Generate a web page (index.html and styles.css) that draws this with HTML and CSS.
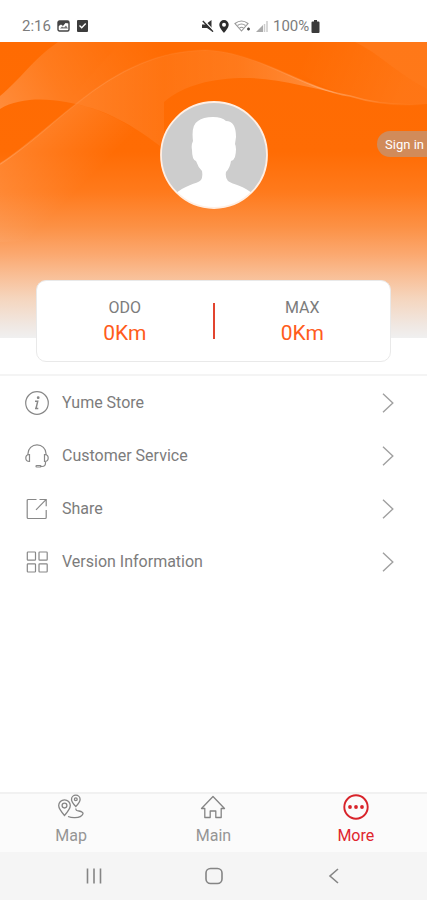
FILE: index.html
```html
<!DOCTYPE html>
<html lang="en">
<head>
<meta charset="utf-8">
<meta name="viewport" content="width=device-width, initial-scale=1">
<title>More</title>
<link rel="stylesheet" href="styles.css">
</head>
<body>
<div class="app">
  <header class="status">
    <div class="status-group">
      <span>2:16</span>
      <svg width="13" height="12" viewBox="0 0 13 12"><rect x="1" y="1" width="11" height="10" rx="1.5" fill="none" stroke="#444" stroke-width="1.4"/><path d="M1 1h11v2.5L8.500 3 6 6 4 4.500 1 6.500z" fill="#444"/><path d="M3 8.500l2-2 2 1 2-2 2 3z" fill="#777"/></svg>
      <svg class="gap" width="11" height="12" viewBox="0 0 11 12"><rect width="11" height="12" rx="1" fill="#3c3c3c"/><path d="M2.500 5.500l2.200 2.200L8.700 3.500" fill="none" stroke="#fff" stroke-width="1.400"/></svg>
    </div>
    <div class="status-group signals">
      <svg width="12" height="12" viewBox="0 0 12 12"><path d="M0 4.500h3.500L9.500 0v11L5 8H0z" fill="#333"/><path d="M1.500 0L12 11" stroke="#fff" stroke-width="1.500"/><path d="M.8 1L11 11.700" stroke="#333" stroke-width="1.400"/></svg>
      <svg width="10" height="13" viewBox="0 0 10 13"><path d="M5 0a4.700 4.700 0 0 1 4.700 4.800C9.700 8 5 13 5 13S.3 8 .3 4.800A4.700 4.700 0 0 1 5 0z" fill="#2d2d2d"/><circle cx="5" cy="4.700" r="2" fill="#fff"/></svg>
      <svg width="17" height="13" viewBox="0 0 17 13" fill="none" stroke="#999" stroke-width="1.100"><path d="M1 3.500q6.500-5 13 0L7.500 11z"/><path d="M3.500 5.500q4-3 8 0M5.500 8q2-1.500 4 0"/><path d="M13 9h3M14.500 7.500v3" stroke="#444" stroke-width="1.400"/></svg>
      <svg width="12" height="12" viewBox="0 0 12 12"><path d="M0 12L7 5v7z" fill="#aaa"/><path d="M8.500 4v8M11 1v11" stroke="#ccc" stroke-width="1.500"/></svg>
      <span>100%</span>
      <svg class="battery" width="9" height="13" viewBox="0 0 9 13"><path d="M3 0h3v1.500h1.500q1 0 1 1V12q0 1-1 1h-6q-1 0-1-1V2.500q0-1 1-1H3z" fill="#3b3b3b"/></svg>
    </div>
  </header>

  <main>
    <section class="hero">
      <svg class="waves" viewBox="0 0 427 296" preserveAspectRatio="none" aria-hidden="true">
        <defs>
          <linearGradient id="left" gradientUnits="userSpaceOnUse" x1="0" y1="70" x2="110" y2="10"><stop offset="0" stop-color="#fff" stop-opacity=".22"/><stop offset=".5" stop-color="#fff" stop-opacity=".11"/><stop offset="1" stop-color="#fff" stop-opacity=".04"/></linearGradient>
          <linearGradient id="mid" gradientUnits="userSpaceOnUse" x1="70" y1="65" x2="165" y2="5"><stop offset="0" stop-color="#fff" stop-opacity=".11"/><stop offset="1" stop-color="#fff" stop-opacity="0"/></linearGradient>
          <linearGradient id="ribbon" gradientUnits="userSpaceOnUse" x1="76" y1="0" x2="350" y2="0"><stop offset="0" stop-color="#fff" stop-opacity=".14"/><stop offset=".15" stop-color="#fff" stop-opacity=".1"/><stop offset=".32" stop-color="#fff" stop-opacity=".06"/><stop offset=".6" stop-color="#fff" stop-opacity=".1"/><stop offset="1" stop-color="#fff" stop-opacity=".26"/></linearGradient>
          <linearGradient id="low" gradientUnits="userSpaceOnUse" x1="25" y1="92" x2="80" y2="146"><stop offset="0" stop-color="#fff" stop-opacity=".15"/><stop offset="1" stop-color="#fff" stop-opacity="0"/></linearGradient>
          <linearGradient id="right" gradientUnits="userSpaceOnUse" x1="300" y1="20" x2="400" y2="60"><stop offset="0" stop-color="#fff" stop-opacity="0"/><stop offset="1" stop-color="#fff" stop-opacity=".07"/></linearGradient>
          <linearGradient id="line" gradientUnits="userSpaceOnUse" x1="0" y1="0" x2="427" y2="0"><stop offset="0" stop-color="#fff" stop-opacity=".18"/><stop offset=".2" stop-color="#fff" stop-opacity=".06"/><stop offset=".6" stop-color="#fff" stop-opacity=".02"/><stop offset=".78" stop-color="#fff" stop-opacity=".28"/><stop offset=".92" stop-color="#fff" stop-opacity=".06"/><stop offset="1" stop-color="#fff" stop-opacity="0"/></linearGradient>
        </defs>
        <path d="M0 54C20 38 32 18 58 0h65C100 20 84 44 66 60C44 56 18 56 0 67z" fill="url(#left)"/>
        <path d="M66 60C84 44 100 20 123 0h82v8C160 10 120 28 76 62z" fill="url(#mid)"/>
        <path d="M76 62C120 26 160 9 205 8C260 10 300 46 350 54C310 46 275 35 240 36C205 37 180 46 164 60V107C132 82 105 68 76 62z" fill="url(#ribbon)"/>
        <path d="M0 122C28 104 50 82 76 62C105 68 130 82 158 104C150 150 80 200 0 200z" fill="url(#low)"/>
        <path d="M0 122C28 104 50 82 76 62C120 26 160 9 205 8C260 10 300 46 350 54Q385 65 427 62" fill="none" stroke="url(#line)" stroke-width="1.500"/>
        <path d="M355 0C380 12 400 34 427 47V0z" fill="#fff" opacity=".09"/>
        <path d="M250 0C280 15 310 44 350 54Q385 65 427 62V47C400 34 380 12 355 0z" fill="url(#right)"/>
      </svg>
      <svg class="avatar" viewBox="0 0 108 108" role="img" aria-label="Profile picture">
        <defs><clipPath id="face"><circle cx="54" cy="54" r="53"/></clipPath></defs>
        <circle cx="54" cy="54" r="53" fill="#cdcdcd"/>
        <path clip-path="url(#face)" d="M14 94C24 84 37 83 41 79Q43 76 42 70Q38 66 36 60Q32 59 32 49Q31 44 33 40Q31 24 38 20Q43 16 53 16Q62 16 66 20Q76 20 76 36L75 43Q77 47 75 56Q74 59 71 60Q70 67 66 71Q65 77 68 80C73 84 84 84 94 94L92 108H16z" fill="#fff"/>
        <circle cx="54" cy="54" r="53" fill="none" stroke="#ffefe4" stroke-width="1.800"/>
      </svg>
      <button class="signin" type="button">Sign in</button>
    </section>

    <section class="stats">
      <div class="stat"><span class="stat-label">ODO</span><span class="stat-value">0Km</span></div>
      <span class="stat-rule"></span>
      <div class="stat"><span class="stat-label">MAX</span><span class="stat-value">0Km</span></div>
    </section>

    <nav class="menu" aria-label="Options">
      <a class="row" href="#store">
        <svg class="row-icon" viewBox="0 0 24 24"><circle cx="12" cy="12" r="11.300"/><path d="M10 10.300h2.700L11 17.500h2.300M10 17.500h1.500" stroke-width="1.500"/><circle cx="13.200" cy="6.700" r=".8" fill="#777"/></svg>
        <span>Yume Store</span>
        <svg class="chevron" viewBox="0 0 12 20"><path d="M1 .8L10.800 10 1 19.200"/></svg>
      </a>
      <a class="row" href="#service">
        <svg class="row-icon" viewBox="0 0 24 24"><path d="M3 11V9.500a9 8.700 0 0 1 18 0V11M20.500 18v1q0 3.500-3.500 3.500h-2"/><path d="M4.500 10.500v7Q.8 17.500.8 14t3.700-3.500zM19.500 10.500v7q3.700 0 3.700-3.500t-3.700-3.500z"/><rect x="11" y="21.500" width="5" height="1.500" rx=".7"/></svg>
        <span>Customer Service</span>
        <svg class="chevron" viewBox="0 0 12 20"><path d="M1 .8L10.800 10 1 19.200"/></svg>
      </a>
      <a class="row" href="#share">
        <svg class="row-icon" viewBox="0 0 24 24"><path d="M11.500 2.500H3.200q-1 0-1 1v17q0 1 1 1h17q1 0 1-1v-7.500M14.500 2.500h6.700v6.700M21 2.700L11 12.800"/></svg>
        <span>Share</span>
        <svg class="chevron" viewBox="0 0 12 20"><path d="M1 .8L10.800 10 1 19.200"/></svg>
      </a>
      <a class="row" href="#version">
        <svg class="row-icon" viewBox="0 0 24 24"><rect x="2.300" y="2" width="8.200" height="8.200" rx=".7"/><rect x="14" y="2" width="8.200" height="8.200" rx=".7"/><rect x="2.300" y="13.800" width="8.200" height="8.200" rx=".7"/><rect x="14" y="13.800" width="8.200" height="8.200" rx=".7"/></svg>
        <span>Version Information</span>
        <svg class="chevron" viewBox="0 0 12 20"><path d="M1 .8L10.800 10 1 19.200"/></svg>
      </a>
    </nav>
  </main>

  <nav class="tabs" aria-label="Main">
    <a class="tab" href="#map">
      <svg viewBox="0 0 28 26"><path d="M7.500 21.500Q1.700 15 1.700 11.600a5.800 5.800 0 0 1 11.600 0Q13.300 15 7.500 21.500z"/><circle cx="7.500" cy="11.600" r="2.400"/><path d="M18.800 12.500Q14.500 8 14.500 5.400a4.300 4.300 0 0 1 8.600 0Q23.100 8 18.800 12.500z"/><circle cx="18.800" cy="5.300" r="1.400"/><path d="M19 14.500q-.5 2.500 3 2.500 4.500 1 4 2.800-1.500 3.800-8 3.800-3.500.2-7-1.100"/></svg>
      <span>Map</span>
    </a>
    <a class="tab" href="#main">
      <svg viewBox="0 0 28 26"><path d="M2.500 14.500L14 2.500l11.500 12h-3.300v9h-5.400v-6.500h-5.600v6.500H5.800v-9z" stroke-linejoin="round"/></svg>
      <span>Main</span>
    </a>
    <a class="tab active" href="#more" aria-current="page">
      <svg viewBox="0 0 28 26"><circle cx="14" cy="13" r="11.700" stroke-width="1.900"/><g fill="#d8232a" stroke="none"><circle cx="8" cy="13" r="1.900"/><circle cx="14" cy="13" r="1.900"/><circle cx="20" cy="13" r="1.900"/></g></svg>
      <span>More</span>
    </a>
  </nav>

  <div class="system">
    <button type="button" aria-label="Recent apps"><svg viewBox="0 0 20 20"><path d="M3.500 2.500v15M10 2.500v15M16.500 2.500v15"/></svg></button>
    <button type="button" aria-label="Home"><svg viewBox="0 0 20 20"><rect x="2" y="2.500" width="16" height="15" rx="4.500"/></svg></button>
    <button type="button" aria-label="Back"><svg viewBox="0 0 20 20"><path d="M14 3L6 10l8 7"/></svg></button>
  </div>
</div>
</body>
</html>
```
FILE: styles.css
```css
* {
  box-sizing: border-box;
}

body {
  margin: 0;
  background: #fff;
  color: #7c7c7c;
  font-family: Roboto, "Liberation Sans", sans-serif;
  font-size: 16px;
}

a {
  color: inherit;
  text-decoration: none;
}

button {
  padding: 0;
  border: 0;
  background: none;
  font: inherit;
  cursor: pointer;
}

svg {
  display: block;
  flex: none;
}

.app {
  display: flex;
  flex-direction: column;
  min-height: 100vh;
}

main {
  flex: 1;
}

.status {
  display: grid;
  grid-template-columns: 202px 1fr;
  align-items: center;
  height: 42px;
  padding-top: 10px;
  font-size: 15px;
}

.status-group {
  display: flex;
  align-items: center;
  gap: 6px;
  padding-left: 22px;
}

.status-group .gap {
  margin-left: 1px;
}

.signals {
  gap: 5px;
  padding-left: 0;
}

.signals .battery {
  margin-left: -3px;
}

.hero {
  position: relative;
  display: flex;
  justify-content: center;
  height: 296px;
  padding-top: 59px;
  background: linear-gradient(#ff6b02 0, #ff6c04 110px, #ff7a1c 150px, #fc9145 185px, #fba86f 212px, #f9bd93 232px, #f5d5bd 256px, #f0e8e3 284px, #f0f0f0 296px);
}

.waves {
  position: absolute;
  inset: 0;
  width: 100%;
  height: 100%;
}

.avatar {
  position: relative;
  width: 108px;
  height: 108px;
}

.signin {
  position: absolute;
  top: 89px;
  right: 0;
  height: 26px;
  padding: 0 3px 0 8px;
  border-radius: 13px 0 0 13px;
  background: #d18b5a;
  color: #fff;
  font-size: 13px;
}

.stats {
  position: relative;
  display: flex;
  align-items: center;
  height: 82px;
  margin: -58px 36px 12px;
  border: 1px solid #e9e9e9;
  border-radius: 10px;
  background: #fff;
}

.stat {
  display: flex;
  flex: 1;
  flex-direction: column;
  align-items: center;
}

.stat-label {
  font-size: 16px;
  line-height: 24px;
}

.stat-value {
  color: #ff5c1c;
  font-size: 21px;
  line-height: 26px;
}

.stat-rule {
  width: 2px;
  height: 36px;
  background: #e2442f;
}

.menu {
  border-top: 2px solid #f4f4f4;
}

.row {
  display: flex;
  align-items: center;
  gap: 13px;
  height: 53px;
  padding: 0 33px 0 25px;
}

.row-icon {
  width: 24px;
  height: 24px;
  fill: none;
  stroke: #888;
  stroke-width: 1.2;
}

.chevron {
  width: 12px;
  height: 20px;
  margin-left: auto;
  fill: none;
  stroke: #a0a0a0;
  stroke-width: 1.4;
}

.tabs {
  display: flex;
  height: 60px;
  border-top: 2px solid #f1f1f1;
  background: #fbfbfb;
  color: #959595;
}

.tab {
  display: flex;
  flex: 1;
  flex-direction: column;
  align-items: center;
  gap: 6px;
}

.tab svg {
  width: 28px;
  height: 26px;
  fill: none;
  stroke: #858585;
  stroke-width: 1.3;
}

.tab.active {
  color: #e0252d;
}

.tab.active svg {
  stroke: #d8232a;
}

.system {
  display: flex;
  justify-content: center;
  gap: 100px;
  height: 48px;
  background: #f5f5f5;
}

.system svg {
  width: 20px;
  height: 20px;
  fill: none;
  stroke: #858585;
  stroke-width: 1.6;
}
```
